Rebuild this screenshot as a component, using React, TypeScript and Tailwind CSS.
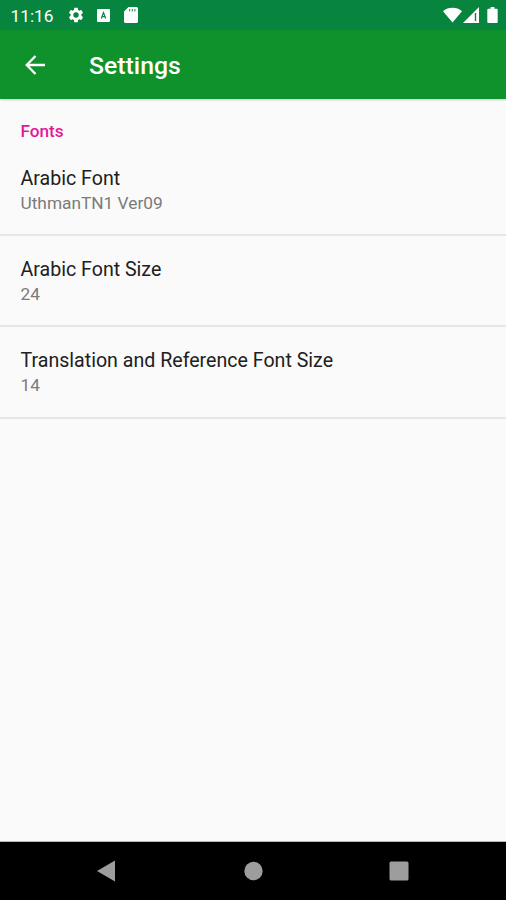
const preferences = [
  { title: 'Arabic Font', summary: 'UthmanTN1 Ver09' },
  { title: 'Arabic Font Size', summary: '24' },
  { title: 'Translation and Reference Font Size', summary: '14' },
]

const StatusBar = () => (
  <div className="h-[30px] shrink-0 bg-[#07843d] text-white flex items-center pl-[10.500px] pr-[8px]">
    <span className="w-[56.500px] text-[17.300px] leading-[30px] pt-[2px]">11:16</span>
    {/* Gear */}
    <svg width="18" height="18" viewBox="0 0 24 24" fill="currentColor">
      <path d="M19.14 12.94c.04-.3.06-.61.06-.94 0-.32-.02-.64-.07-.94l2.03-1.58a.49.49 0 0 0 .12-.61l-1.92-3.32a.488.488 0 0 0-.59-.22l-2.39.96c-.5-.38-1.03-.7-1.62-.94l-.36-2.54a.484.484 0 0 0-.48-.41h-3.84c-.24 0-.43.17-.47.41l-.36 2.54c-.59.24-1.13.57-1.62.94l-2.39-.96c-.22-.08-.47 0-.59.22L2.74 8.87c-.12.21-.08.47.12.61l2.03 1.58c-.05.3-.09.63-.09.94s.02.64.07.94l-2.03 1.58a.49.49 0 0 0-.12.61l1.92 3.32c.12.22.37.29.59.22l2.39-.96c.5.38 1.03.7 1.62.94l.36 2.54c.05.24.24.41.48.41h3.84c.24 0 .44-.17.47-.41l.36-2.54c.59-.24 1.13-.56 1.62-.94l2.39.96c.22.08.47 0 .59-.22l1.92-3.32c.12-.22.07-.47-.12-.61zM12 15.6A3.6 3.6 0 1 1 12 8.400a3.6 3.6 0 0 1 0 7.200z" />
    </svg>
    {/* Keyboard input badge */}
    <svg className="ml-[12px]" width="13" height="13" viewBox="0 0 13 13">
      <rect width="13" height="13" rx="1" fill="currentColor" />
      <path d="M4.300 9.500 6.500 3.600 8.700 9.500M5.200 7.700h2.600" fill="none" stroke="#07843d" strokeWidth="1.200" />
    </svg>
    {/* SD card */}
    <svg className="ml-[14px]" width="14" height="16" viewBox="0 0 14 16">
      <path d="M4.500 0h8A1.500 1.500 0 0 1 14 1.500v13a1.500 1.500 0 0 1-1.500 1.500h-11A1.500 1.500 0 0 1 0 14.500V4.500z" fill="currentColor" />
      <path d="M5.700 2v2.400M8.300 2v2.400M10.900 2v2.400" stroke="#07843d" strokeWidth="1" />
    </svg>
    <div className="ml-auto flex items-center">
      <svg width="19" height="16" viewBox="0 0 19 16" fill="currentColor">
        <path d="M9.500 15.500 0 4.200C2.500 1.900 5.800.8 9.500.8s7 1.100 9.500 3.400z" />
      </svg>
      <svg className="ml-[1px]" width="16" height="16" viewBox="0 0 16 16">
        <path d="M16 0v16H0z" fill="currentColor" />
        <path d="M12.500 6v8" stroke="#07843d" strokeWidth="1.400" />
      </svg>
      <svg className="ml-[8px]" width="11" height="16" viewBox="0 0 11 17" fill="currentColor">
        <path d="M3.500 0h4v1.800H10a1 1 0 0 1 1 1V16a1 1 0 0 1-1 1H1a1 1 0 0 1-1-1V2.800a1 1 0 0 1 1-1h2.500z" />
      </svg>
    </div>
  </div>
)

const AppBar = () => (
  <div className="h-[69px] shrink-0 bg-[#0f912b] text-white flex items-center pl-[25px] shadow-[0_1px_2px_rgba(0,0,0,0.2)]">
    <button aria-label="Back">
      <svg width="20" height="20" viewBox="0 0 20 20" fill="none" stroke="currentColor" strokeWidth="2.300">
        <path d="M20 10H2M10.500 1 1.700 10l8.800 9" />
      </svg>
    </button>
    <h1 className="ml-[44px] pt-[2px] text-[24.800px] leading-[30px] font-medium">Settings</h1>
  </div>
)

const NavigationBar = () => (
  <div className="h-[58px] shrink-0 bg-black">
    <svg width="506" height="58" viewBox="0 0 506 58" fill="#9d9d9d">
      <path d="M97 29 115 18.500v21z" />
      <circle cx="253.500" cy="29" r="9.200" />
      <rect x="389.500" y="19.500" width="19" height="19" rx="1.500" />
    </svg>
  </div>
)

export default function App() {
  return (
    <div className="w-[506px] h-[900px] flex flex-col overflow-hidden bg-[#fafafa] font-['Roboto',sans-serif]">
      <StatusBar />
      <AppBar />
      <main className="flex-1 min-h-0 border-b border-[#b8b8b8]">
        <h2 className="h-[46px] pt-[21px] pl-[20.500px] text-[17.200px] leading-[22px] font-medium text-[#e0189a]">Fonts</h2>
        {preferences.map((item) => (
          <div key={item.title} className="h-[91.200px] pt-[21px] pl-[20.500px] border-b-2 border-[#e6e6e6]">
            <div className="text-[19.600px] leading-[26px] text-[#202020]">{item.title}</div>
            <div className="text-[17.300px] leading-[22px] text-[#7b7b7b]">{item.summary}</div>
          </div>
        ))}
      </main>
      <NavigationBar />
    </div>
  )
}
